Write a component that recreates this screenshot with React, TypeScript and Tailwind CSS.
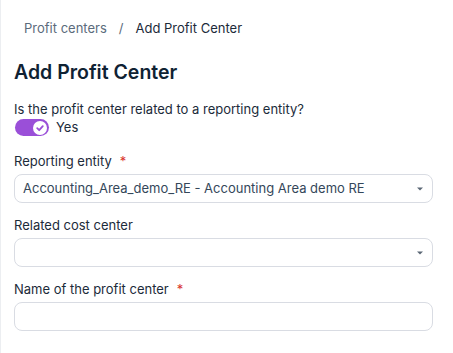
import React from 'react';

const Caret: React.FC = () => (
  <svg className="h-2 w-2 text-[#5b6775]" viewBox="0 0 8 8" fill="currentColor">
    <path d="M1 2.5h6L4 5.5z" />
  </svg>
);

const Required: React.FC = () => <span className="ml-2 text-[#d9342b]">*</span>;

const App: React.FC = () => {
  return (
    <div
      className="w-[453px] h-[353px] bg-white border-l border-[#eceef1] text-[#1c2b3a] overflow-hidden"
      style={{ fontFamily: 'Inter, "Noto Sans", sans-serif' }}
    >
      {/* Breadcrumb */}
      <div className="flex items-center pl-[23px] pt-[19px] text-[13px] leading-[18px]">
        <span className="text-[#5b6b7c]">Profit centers</span>
        <span className="ml-[12px] mr-[12px] text-[#5b6b7c]">/</span>
        <span className="text-[#1c2b3a]">Add Profit Center</span>
      </div>

      <div className="px-[13px] pr-[20px]">
        <h1 className="mt-[22px] text-[19.5px] leading-[26px] font-semibold text-[#0f2233]">Add Profit Center</h1>

        {/* Toggle */}
        <div className="mt-[16px] text-[13px] leading-[17px]">Is the profit center related to a reporting entity?</div>
        <div className="mt-[1px] flex items-center gap-[7px] pl-[1px]">
          <div className="w-[34px] h-[17px] rounded-full bg-[#9a4fd8] flex items-center justify-end pr-[2px]">
            <div className="w-[14px] h-[14px] rounded-full bg-white flex items-center justify-center">
              <svg className="w-[10px] h-[10px] text-[#9a4fd8]" viewBox="0 0 10 10" fill="none" stroke="currentColor" strokeWidth={1.8} strokeLinecap="round" strokeLinejoin="round">
                <path d="M2.2 5.2l2 2 3.6-4" />
              </svg>
            </div>
          </div>
          <span className="text-[13px] leading-[17px]">Yes</span>
        </div>

        {/* Reporting entity */}
        <div className="mt-[17px] text-[13px] leading-[17px]">
          Reporting entity<Required />
        </div>
        <div className="mt-[4px] h-[29px] rounded-[8px] border border-[#d9dce3] flex items-center justify-between pl-[8px] pr-[8px]">
          <span className="text-[13px] text-[#34475a]">Accounting_Area_demo_RE - Accounting Area demo RE</span>
          <Caret />
        </div>

        {/* Related cost center */}
        <div className="mt-[14px] text-[13px] leading-[17px]">Related cost center</div>
        <div className="mt-[4px] h-[29px] rounded-[8px] border border-[#d9dce3] flex items-center justify-end pr-[8px]">
          <Caret />
        </div>

        {/* Name */}
        <div className="mt-[14px] text-[13px] leading-[17px]">
          Name of the profit center<Required />
        </div>
        <div className="mt-[4px] h-[29px] rounded-[8px] border border-[#d9dce3]" />
      </div>
    </div>
  );
};

export default App;
